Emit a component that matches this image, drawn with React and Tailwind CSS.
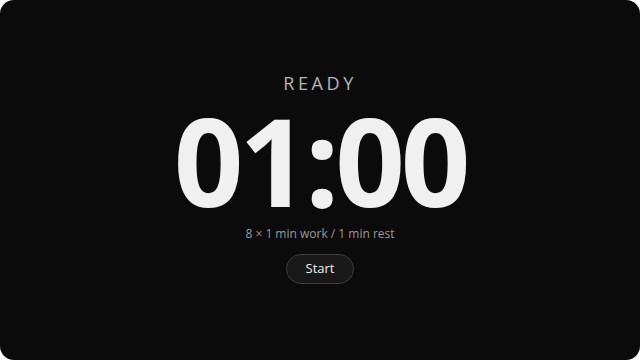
export default function App() {
  return (
    <div className="h-[360px] w-[640px] bg-white">
      <div
        className="flex h-full w-full flex-col items-center rounded-[14px] bg-[#0b0b0b] pt-[70px]"
        style={{ fontFamily: '"Open Sans", sans-serif' }}
      >
        <div className="text-[18px] leading-[26px] tracking-[0.2em] text-[#b5b5b5]">READY</div>
        <div className="mt-[3px] text-[122px] font-bold leading-[122px] tracking-[-0.035em] text-[#f0f0f0]">01:00</div>
        <div className="mt-[5px] text-[12px] leading-[16px] text-[#999999]">8 × 1 min work / 1 min rest</div>
        <button
          type="button"
          className="mt-[12px] h-[30px] rounded-full border border-[#3d3d3d] bg-[#181818] px-[19px] text-[13px] text-[#f0f0f0]"
        >
          Start
        </button>
      </div>
    </div>
  );
}
